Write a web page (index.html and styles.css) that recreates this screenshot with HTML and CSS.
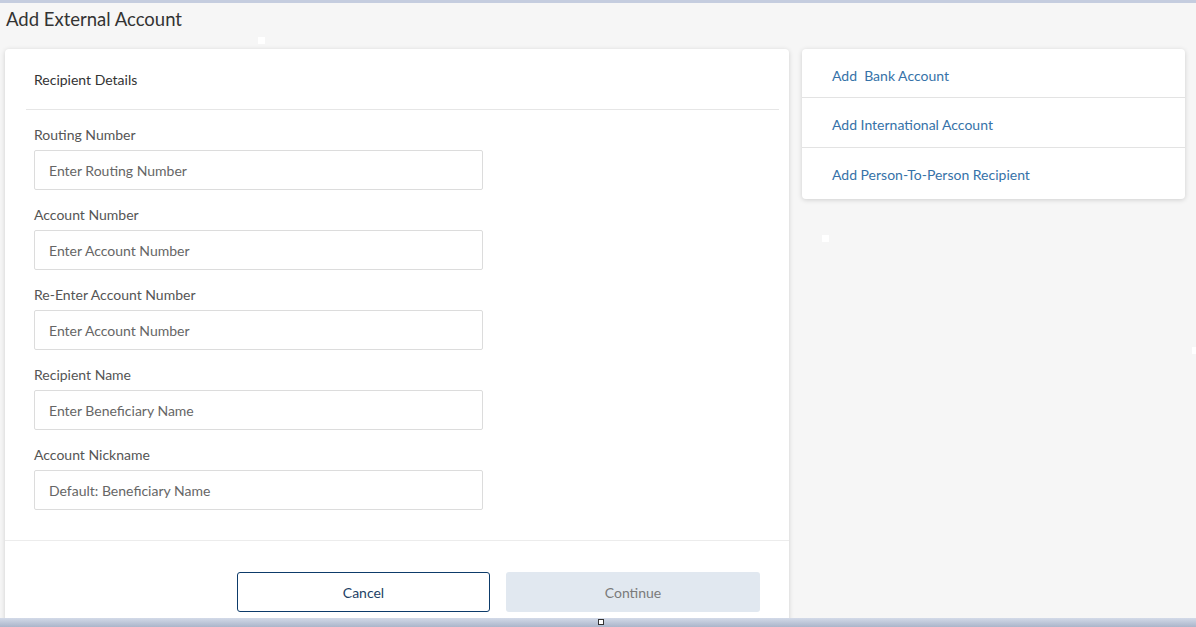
FILE: index.html
```html
<!DOCTYPE html>
<html lang="en">
<head>
<meta charset="utf-8">
<title>Add External Account</title>
<link rel="stylesheet" href="styles.css">
</head>
<body>
<div class="topbar"></div>
<h1 class="page-title">Add External Account</h1>
<div class="layout">
  <section class="card form-card">
    <div class="card-header">Recipient Details</div>
    <div class="fields">
      <div class="field">
        <label class="label">Routing Number</label>
        <div class="input">Enter Routing Number</div>
      </div>
      <div class="field">
        <label class="label">Account Number</label>
        <div class="input">Enter Account Number</div>
      </div>
      <div class="field">
        <label class="label">Re-Enter Account Number</label>
        <div class="input">Enter Account Number</div>
      </div>
      <div class="field">
        <label class="label">Recipient Name</label>
        <div class="input">Enter Beneficiary Name</div>
      </div>
      <div class="field">
        <label class="label">Account Nickname</label>
        <div class="input">Default: Beneficiary Name</div>
      </div>
    </div>
    <div class="actions">
      <button class="btn btn-cancel">Cancel</button>
      <button class="btn btn-continue">Continue</button>
    </div>
  </section>
  <aside class="card side-card">
    <a class="side-link">Add&nbsp; Bank Account</a>
    <a class="side-link">Add International Account</a>
    <a class="side-link">Add Person-To-Person Recipient</a>
  </aside>
</div>
<div class="dot dot-a"></div>
<div class="dot dot-b"></div>
<div class="dot dot-c"></div>
<div class="bottombar"><span class="handle"></span></div>
</body>
</html>
```
FILE: styles.css
```css
html, body {
  margin: 0;
  padding: 0;
  background: #f6f6f6;
  font-family: Lato, "Source Sans Pro", "Liberation Sans", sans-serif;
  color: #333;
  height: 627px;
  overflow: hidden;
}
.topbar {
  height: 3px;
  background: #c5cddf;
}
.page-title {
  margin: 0;
  padding: 5px 0 0 6px;
  height: 41px;
  box-sizing: border-box;
  font-size: 18.5px;
  font-weight: 400;
  line-height: 22px;
  color: #333;
}
.layout {
  display: flex;
  align-items: flex-start;
  gap: 13px;
  padding-left: 5px;
  margin-top: 5px;
}
.card {
  background: #fff;
  border-radius: 4px;
  box-shadow: 0 1px 5px rgba(0,0,0,0.16);
}
.form-card {
  width: 784px;
  height: 600px;
  border-radius: 4px 4px 0 0;
}
.card-header {
  margin: 0 10px 0 21px;
  padding-left: 8px;
  height: 60px;
  line-height: 62px;
  font-size: 14px;
  color: #333;
  border-bottom: 1px solid #e6e6e6;
}
.fields {
  padding: 15px 0 15px 29px;
  border-bottom: 1px solid #ececec;
}
.field {
  display: flex;
  flex-direction: column;
  gap: 5px;
  margin-bottom: 15px;
}
.label {
  font-size: 14px;
  line-height: 20px;
  color: #555;
}
.input {
  width: 449px;
  height: 40px;
  box-sizing: border-box;
  border: 1px solid #dcdcdc;
  border-radius: 2px;
  padding-left: 14px;
  line-height: 40px;
  font-size: 14px;
  color: #666;
}
.actions {
  display: flex;
  justify-content: flex-end;
  gap: 16px;
  padding: 31px 29px 0 0;
}
.btn {
  width: 254px;
  height: 40px;
  border-radius: 3px;
  font-family: inherit;
  font-size: 14px;
  padding: 0;
}
.btn-cancel {
  width: 253px;
  background: #fff;
  border: 1px solid #0d3b6a;
  color: #1d3f66;
}
.btn-continue {
  background: #e1e8f0;
  border: none;
  color: #7a7a7a;
}
.side-card {
  width: 383px;
  display: flex;
  flex-direction: column;
}
.side-link {
  display: block;
  height: 49px;
  line-height: 53px;
  padding-left: 30px;
  font-size: 14px;
  color: #3672a8;
  border-bottom: 1px solid #e3e3e3;
  overflow: hidden;
}
.side-link:first-child {
  height: 48px;
}
.side-link:last-child {
  border-bottom: none;
  height: 51px;
}
.dot {
  position: absolute;
  background: #fff;
}
.dot-a { left: 258px; top: 37px; width: 7px; height: 7px; }
.dot-b { left: 822px; top: 235px; width: 7px; height: 7px; }
.dot-c { left: 1192px; top: 347px; width: 4px; height: 7px; }
.bottombar {
  position: fixed;
  left: 0;
  right: 0;
  bottom: 0;
  height: 9px;
  background: linear-gradient(#d3dae8, #aab5ca);
}
.handle {
  position: absolute;
  left: 598px;
  top: 1px;
  width: 4px;
  height: 4px;
  border: 1px solid #333;
  background: #fff;
}
```
